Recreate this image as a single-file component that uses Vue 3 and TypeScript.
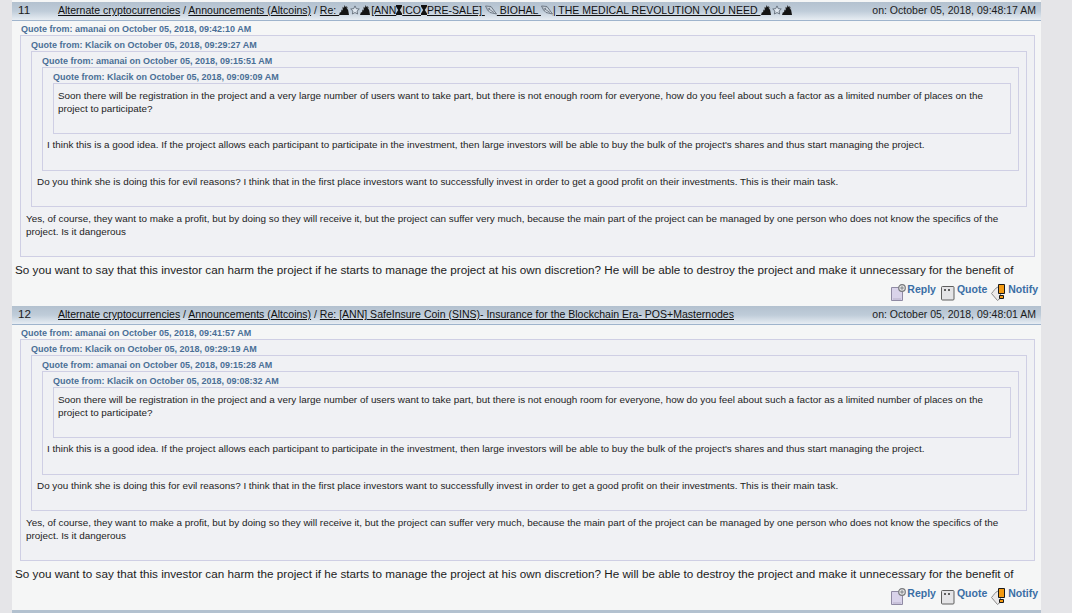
<script setup lang="ts">
interface Post {
  n: number
  kind: 'biohal' | 'sins'
  date: string
  quotes: string[]
}
const posts: Post[] = [
  { n: 11, kind: 'biohal', date: 'on: October 05, 2018, 09:48:17 AM', quotes: ['09:42:10', '09:29:27', '09:15:51', '09:09:09'] },
  { n: 12, kind: 'sins', date: 'on: October 05, 2018, 09:48:01 AM', quotes: ['09:41:57', '09:29:19', '09:15:28', '09:08:32'] },
]
</script>

<template>
  <div class="page">
    <div v-for="p in posts" :key="p.n" class="post">
      <div class="head">
        <span class="num">{{ p.n }}</span>
        <span class="crumbs">
          <a>Alternate cryptocurrencies</a> / <a>Announcements (Altcoins)</a> /
          <a v-if="p.kind === 'biohal'">Re: <svg class="g" width="11" height="10" viewBox="0 0 11 10"><path d="M0 10l1-3 1 .5.5-3 1 1L4 2l1 1 .5-3 1 2 1-1 .5 3 1 .5.5 2.500.5 3z" fill="#141414"/><path d="M3 3.500l.7-2 .6 2zM8 3l.8-1.500.4 2.500z" fill="#6a6a6a"/></svg><svg class="g" width="10" height="10" viewBox="0 0 11 10"><path d="M5.500 .5l1.400 3 3.300.4-2.400 2.200.6 3.300-2.900-1.600-2.900 1.600.6-3.300L.8 3.900l3.300-.4z" fill="#dde5ee" stroke="#59636f" stroke-width=".9"/></svg><svg class="g" width="11" height="10" viewBox="0 0 11 10"><path d="M0 10l1-3 1 .5.5-3 1 1L4 2l1 1 .5-3 1 2 1-1 .5 3 1 .5.5 2.500.5 3z" fill="#141414"/><path d="M3 3.500l.7-2 .6 2zM8 3l.8-1.500.4 2.500z" fill="#6a6a6a"/></svg>[ANN<svg class="g" width="6" height="10" viewBox="0 0 6 10"><path d="M0 0h6v1.500L3.800 5 6 8.500V10H0V8.500L2.200 5 0 1.500z" fill="#111"/></svg>ICO<svg class="g" width="6" height="10" viewBox="0 0 6 10"><path d="M0 0h6v1.500L3.800 5 6 8.500V10H0V8.500L2.200 5 0 1.500z" fill="#111"/></svg>PRE-SALE] <svg class="g" width="12" height="10" viewBox="0 0 12 10"><path d="M.5 1L6 1.500 11.500 9 5 7.500 2.500 5z" fill="#ccd5df" stroke="#59636f" stroke-width=".8"/><path d="M2.500 3L9 7.500M5 2.500l-1.500 3" stroke="#59636f" stroke-width=".7"/></svg> BIOHAL <svg class="g" width="12" height="10" viewBox="0 0 12 10"><path d="M.5 1L6 1.500 11.500 9 5 7.500 2.500 5z" fill="#ccd5df" stroke="#59636f" stroke-width=".8"/><path d="M2.500 3L9 7.500M5 2.500l-1.500 3" stroke="#59636f" stroke-width=".7"/></svg>| THE MEDICAL REVOLUTION YOU NEED <svg class="g" width="11" height="10" viewBox="0 0 11 10"><path d="M0 10l1-3 1 .5.5-3 1 1L4 2l1 1 .5-3 1 2 1-1 .5 3 1 .5.5 2.500.5 3z" fill="#141414"/><path d="M3 3.500l.7-2 .6 2zM8 3l.8-1.500.4 2.500z" fill="#6a6a6a"/></svg><svg class="g" width="10" height="10" viewBox="0 0 11 10"><path d="M5.500 .5l1.400 3 3.300.4-2.400 2.200.6 3.300-2.900-1.600-2.900 1.600.6-3.300L.8 3.900l3.300-.4z" fill="#dde5ee" stroke="#59636f" stroke-width=".9"/></svg><svg class="g" width="11" height="10" viewBox="0 0 11 10"><path d="M0 10l1-3 1 .5.5-3 1 1L4 2l1 1 .5-3 1 2 1-1 .5 3 1 .5.5 2.500.5 3z" fill="#141414"/><path d="M3 3.500l.7-2 .6 2zM8 3l.8-1.500.4 2.500z" fill="#6a6a6a"/></svg></a>
          <a v-else>Re: [ANN] SafeInsure Coin (SINS)- Insurance for the Blockchain Era- POS+Masternodes</a>
        </span>
        <span class="date">{{ p.date }}</span>
      </div>
      <div class="body">
        <div class="qh first">Quote from: amanai on October 05, 2018, {{ p.quotes[0] }} AM</div>
        <div class="q outer">
          <div class="qh">Quote from: Klacik on October 05, 2018, {{ p.quotes[1] }} AM</div>
          <div class="q mid">
            <div class="qh">Quote from: amanai on October 05, 2018, {{ p.quotes[2] }} AM</div>
            <div class="q">
              <div class="qh">Quote from: Klacik on October 05, 2018, {{ p.quotes[3] }} AM</div>
              <div class="q inner">
                Soon there will be registration in the project and a very large number of users want to take part, but there is not enough room for everyone, how do you feel about such a factor as a limited number of places on the project to participate?<br /><br />
              </div>
              I think this is a good idea. If the project allows each participant to participate in the investment, then large investors will be able to buy the bulk of the project's shares and thus start managing the project.<br /><br />
            </div>
            Do you think she is doing this for evil reasons? I think that in the first place investors want to successfully invest in order to get a good profit on their investments. This is their main task.<br /><br />
          </div>
          Yes, of course, they want to make a profit, but by doing so they will receive it, but the project can suffer very much, because the main part of the project can be managed by one person who does not know the specifics of the project. Is it dangerous<br /><br />
        </div>
        <p class="text">So you want to say that this investor can harm the project if he starts to manage the project at his own discretion? He will be able to destroy the project and make it unnecessary for the benefit of</p>
      </div>
      <div class="actions">
        <a class="act act-reply">
          <svg class="ic-reply" width="15" height="17" viewBox="0 0 15 17"><path d="M.5 3.500h11v13H.5z" fill="#d9d3ea" stroke="#8f8aa3"/><path d="M2 15h8" stroke="#b6afc9"/><circle cx="11" cy="4" r="3.300" fill="#e8e8e8" stroke="#77797d" stroke-width="1.200"/><path d="M11 2.200v3.600M9.200 4h3.600" stroke="#7d8084"/></svg>
          <span>Reply</span>
        </a>
        <a class="act">
          <svg class="ic-quote" width="14" height="15" viewBox="0 0 14 15"><rect x=".5" y=".5" width="12.500" height="13.500" rx="1" fill="#e4e4e6" stroke="#5e5e5e"/><path d="M3 4h2M7 4h2" stroke="#333" stroke-width="1.500"/></svg>
          <span>Quote</span>
        </a>
        <a class="act">
          <svg class="ic-notify" width="15" height="18" viewBox="0 0 15 18"><path d="M7 3C4 4 3 7 .5 9.500l6 7 3-2.500V3z" fill="#eceaea" stroke="#8a8a8a"/><path d="M7.500 .5h6v9h-6z" fill="#f39a12" stroke="#1a1a1a"/><path d="M8.500 11.500h4v3h-4z" fill="#f39a12" stroke="#1a1a1a"/></svg>
          <span>Notify</span>
        </a>
      </div>
    </div>
    <div class="tail"></div>
  </div>
</template>

<style scoped>
.page {
  margin: 0 31px 0 12px;
  padding-top: 2px;
  height: 611px;
  overflow: hidden;
  background: #f5f6f6;
  font-family: "Liberation Sans", Arial, sans-serif;
  color: #1c1c1c;
}
.post {
  height: 304px;
}
.head {
  display: flex;
  height: 18px;
  line-height: 16px;
  font-size: 10.53px;
  padding: 0 5px 0 6px;
  background: linear-gradient(#b3c1cf, #bfccd9 50%, #e7edf3);
  border-bottom: 1px solid #9fb4cc;
  white-space: nowrap;
}
.num {
  width: 40px;
  flex: none;
  font-size: 11.7px;
}
.crumbs {
  flex: 1;
}
.crumbs a {
  text-decoration: underline;
  color: #111;
}
.g {
  vertical-align: -1px;
}
.body {
  padding: 0 3px;
  font-size: 9.9px;
  line-height: 13px;
}
.qh {
  font-size: 9px;
  font-weight: bold;
  color: #4a6f96;
  height: 13px;
  line-height: 15px;
  margin-left: 6px;
}
.qh.first {
  padding-top: 2px;
  height: 12px;
  line-height: 12px;
}
.q {
  margin: 0 0 4px 6px;
  padding: 2px 7px 6px 4px;
  border: 1px solid #cfcfe4;
  background: #f0f1f4;
}
.outer,
.mid {
  padding-left: 5px;
  padding-bottom: 5px;
}
.outer {
  margin: 0 3px 0 5px;
}
.outer > .qh,
.mid > .qh {
  margin-left: 5px;
}
.outer > .q,
.mid > .q {
  margin-left: 5px;
}
.outer > .mid {
  margin-bottom: 5px;
}
.inner {
  padding-top: 5px;
  padding-bottom: 5px;
}
.text {
  margin: 6px 0 0 0;
  font-size: 11.7px;
  line-height: 14px;
  white-space: nowrap;
}
.actions {
  display: flex;
  justify-content: flex-end;
  padding-right: 3px;
  margin-top: 6px;
  gap: 4px;
  font-size: 10.5px;
  line-height: 12px;
  font-weight: bold;
  color: #3a6ea5;
}
.act {
  display: flex;
  align-items: flex-start;
  gap: 2px;
}
.act-reply {
  margin-right: 1px;
}
.ic-reply {
  margin-top: 1px;
  margin-right: -1px;
}
.ic-quote {
  margin-top: 3px;
}
.ic-notify {
  margin-top: 1px;
}
.tail {
  height: 3px;
  background: #b3c1cf;
}
</style>

<style>
html, body {
  margin: 0;
  background: #e5e5e8;
}
</style>
